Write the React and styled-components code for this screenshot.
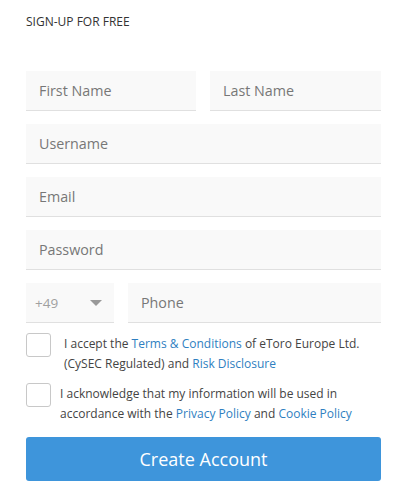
import React from 'react'
import styled, { createGlobalStyle } from 'styled-components'

const GlobalStyle = createGlobalStyle`
    body {
        margin: 0;
        background: #fff;
        font-family: "Open Sans", "Liberation Sans", sans-serif;
    }
`

const Form = styled.div`
    width: 355px;
    padding: 13px 0 0 26px;
    display: flex;
    flex-direction: column;
`

const Title = styled.div`
    font-size: 12px;
    color: #333;
    line-height: 18px;
    margin-bottom: 40px;
`

const Fields = styled.div`
    display: flex;
    flex-direction: column;
    gap: 13px;
`

const Row = styled.div`
    display: grid;
    grid-template-columns: ${props => props.cols || '1fr'};
    gap: 14px;
`

const Input = styled.input`
    box-sizing: border-box;
    width: 100%;
    height: 40px;
    border: none;
    border-bottom: 1px solid #e0e0e0;
    background: #f9f9f9;
    padding: 0 13px;
    font-family: inherit;
    font-size: 14.3px;
    color: #333;
    outline: none;

    &::placeholder {
        color: #777;
    }
`

const CodeSelect = styled.div`
    box-sizing: border-box;
    height: 40px;
    border-bottom: 1px solid #e0e0e0;
    background: #f9f9f9;
    padding: 0 12px 0 9px;
    display: flex;
    align-items: center;
    justify-content: space-between;
    font-size: 13.5px;
    color: #a0a0a0;
`

const Caret = styled.span`
    width: 0;
    height: 0;
    border-left: 6px solid transparent;
    border-right: 6px solid transparent;
    border-top: 6px solid #999;
`

const CheckRow = styled.label`
    display: flex;
    align-items: flex-start;
    margin-top: ${props => props.top || 0}px;
`

const Box = styled.span`
    flex: none;
    box-sizing: border-box;
    width: 25px;
    height: 24px;
    border: 1px solid #c8c8c8;
    border-radius: 3px;
    background: #fff;
`

const CheckText = styled.span`
    margin-left: ${props => props.indent}px;
    margin-top: 1px;
    font-size: 12px;
    line-height: 19.5px;
    color: #444;
`

const Link = styled.a`
    color: #2f7fc1;
    text-decoration: none;
`

const Button = styled.button`
    margin-top: 14px;
    height: 44px;
    width: 100%;
    border: none;
    border-radius: 3px;
    background: #3e95db;
    color: #fff;
    font-family: inherit;
    font-size: 18px;
`

const App = () => (
    <Form>
        <GlobalStyle />
        <Title>SIGN-UP FOR FREE</Title>
        <Fields>
            <Row cols="170px 1fr">
                <Input placeholder="First Name" />
                <Input placeholder="Last Name" />
            </Row>
            <Input placeholder="Username" />
            <Input placeholder="Email" />
            <Input placeholder="Password" type="password" />
            <Row cols="88px 1fr">
                <CodeSelect>
                    +49
                    <Caret />
                </CodeSelect>
                <Input placeholder="Phone" />
            </Row>
        </Fields>
        <CheckRow top={10}>
            <Box />
            <CheckText indent={13}>
                I accept the <Link>Terms &amp; Conditions</Link> of eToro Europe Ltd.
                <br />
                (CySEC Regulated) and <Link>Risk Disclosure</Link>
            </CheckText>
        </CheckRow>
        <CheckRow top={10}>
            <Box />
            <CheckText indent={9}>
                I acknowledge that my information will be used in
                <br />
                accordance with the <Link>Privacy Policy</Link> and <Link>Cookie Policy</Link>
            </CheckText>
        </CheckRow>
        <Button>Create Account</Button>
    </Form>
)

export default App
